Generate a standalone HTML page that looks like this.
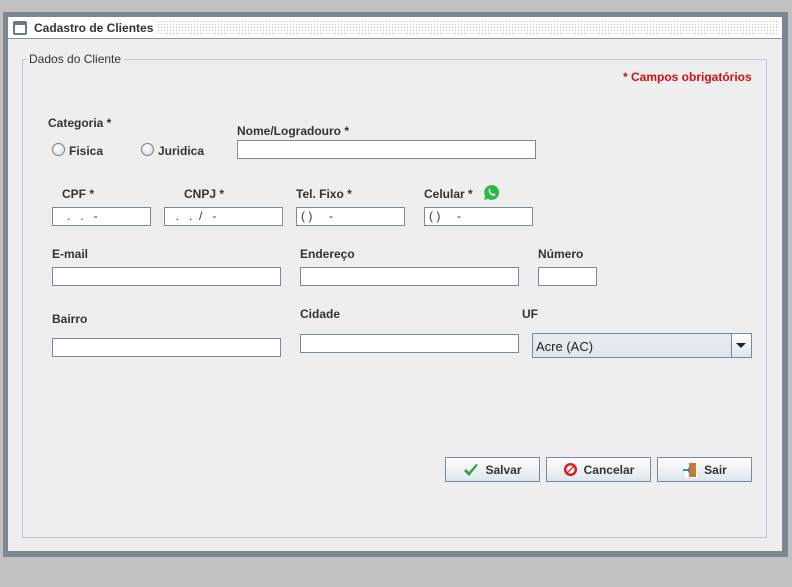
<html><head><style>
body{margin:0;width:792px;height:587px;background:#c0c0c0;position:relative;overflow:hidden;font-family:"Liberation Sans",sans-serif;font-size:12px;color:#222}
div,span{position:absolute;box-sizing:border-box}
.l{font-weight:bold;font-size:12px;color:#333}
.t{background:#fff;border:1px solid #7a8a99;height:19px;font-size:12px;padding:1px 0 0 4px;color:#333;white-space:pre}
.b{height:25px;top:457px;border:1px solid #7a8a99;background:linear-gradient(#fff,#dde6ee);font-weight:bold;font-size:12px;color:#333;display:flex;align-items:center;justify-content:center;gap:6px}
.r{width:13px;height:13px;border-radius:50%;border:1px solid #6f7f8f;background:radial-gradient(circle at 40% 35%,#fff,#cfd8e0)}
</style></head><body>
<div style="left:3px;top:12px;width:785px;height:545px;background:#7b8894"></div>
<div style="left:8px;top:17px;width:774px;height:534px;background:#eeeeee"></div>
<div style="left:8px;top:17px;width:774px;height:22px;background:#fff;border-bottom:1px solid #8a96a0"></div>
<div style="left:157px;top:20px;width:620px;height:16px;background-image:radial-gradient(#bbb 0.6px,transparent 0.7px);background-size:3px 3px"></div>
<div style="left:13px;top:21px;width:14px;height:14px;border:2px solid #6c7a88;border-top-width:4px;border-radius:2px;background:#fff"></div>
<div style="left:34px;top:21px;font-weight:bold;font-size:12px;color:#333">Cadastro de Clientes</div>
<div style="left:22px;top:59px;width:745px;height:479px;border:1px solid #b8c8d8"></div>
<div style="left:26px;top:52px;background:#eeeeee;padding:0 3px;font-size:12px;color:#333">Dados do Cliente</div>
<div style="left:623px;top:70px;font-weight:bold;color:#d01010">* Campos obrigatórios</div>
<div class="l" style="left:48px;top:116px">Categoria *</div>
<div class="r" style="left:52px;top:143px"></div><div class="l" style="left:69px;top:144px">Fisica</div>
<div class="r" style="left:141px;top:143px"></div><div class="l" style="left:158px;top:144px">Juridica</div>
<div class="l" style="left:237px;top:124px">Nome/Logradouro *</div>
<div class="t" style="left:237px;top:140px;width:299px"></div>
<div class="l" style="left:62px;top:187px">CPF *</div>
<div class="l" style="left:184px;top:187px">CNPJ *</div>
<div class="l" style="left:296px;top:187px">Tel. Fixo *</div>
<div class="l" style="left:424px;top:187px">Celular *</div>
<svg style="position:absolute;left:483px;top:184px" width="17" height="17" viewBox="0 0 16 16"><path d="M8 1a7 7 0 0 0-6 10.5L1 15l3.6-1A7 7 0 1 0 8 1z" fill="#2db84a"/><path d="M5.5 4.5c.4-.3.8-.2 1 .2l.6 1.3c.1.3 0 .5-.3.8-.2.2-.2.4 0 .7.5.8 1.1 1.4 1.9 1.8.3.1.5.1.6-.1.3-.4.5-.5.8-.4l1.3.6c.3.2.4.5.2.9-.3.7-1 1.1-1.8.9-2-.5-3.8-2.3-4.4-4.3-.2-.7 0-1.2.1-1.4z" fill="#fff"/></svg>
<div class="t" style="left:52px;top:207px;width:99px">   .   .   -</div>
<div class="t" style="left:164px;top:207px;width:119px">  .   .  /   -</div>
<div class="t" style="left:296px;top:207px;width:109px">( )     -</div>
<div class="t" style="left:424px;top:207px;width:109px">( )     -</div>
<div class="l" style="left:52px;top:247px">E-mail</div>
<div class="l" style="left:300px;top:247px">Endereço</div>
<div class="l" style="left:538px;top:247px">Número</div>
<div class="t" style="left:52px;top:267px;width:229px"></div>
<div class="t" style="left:300px;top:267px;width:219px"></div>
<div class="t" style="left:538px;top:267px;width:59px"></div>
<div class="l" style="left:52px;top:312px">Bairro</div>
<div class="l" style="left:300px;top:307px">Cidade</div>
<div class="l" style="left:522px;top:307px">UF</div>
<div class="t" style="left:52px;top:338px;width:229px"></div>
<div class="t" style="left:300px;top:334px;width:219px"></div>
<div style="left:532px;top:333px;width:220px;height:25px;border:1px solid #7a8a99;background:linear-gradient(#e8edf2,#dfe6ed);font-size:13px;color:#222;padding:5px 0 0 3px">Acre (AC)</div>
<div style="left:731px;top:334px;width:20px;height:23px;border-left:1px solid #7a8a99;background:linear-gradient(#fff,#dde6ee)"></div>
<div style="left:736px;top:343px;width:0;height:0;border-left:5px solid transparent;border-right:5px solid transparent;border-top:5px solid #222"></div>
<div class="b" style="left:445px;width:95px"><svg width="16" height="14" viewBox="0 0 16 14"><path d="M1 8l5 5L15 2l-2-1-7 8-3-3z" fill="#3aa040"/></svg>Salvar</div>
<div class="b" style="left:546px;width:105px"><svg width="15" height="15" viewBox="0 0 16 16"><circle cx="8" cy="8" r="7" fill="#d42020"/><circle cx="8" cy="8" r="4.3" fill="#fff"/><path d="M4 11L11 4l1 1-7 7z" fill="#d42020"/></svg>Cancelar</div>
<div class="b" style="left:657px;width:95px"><svg width="16" height="16" viewBox="0 0 16 16"><rect x="3" y="2" width="12" height="14" fill="#fff"/><rect x="7" y="1" width="7" height="14" fill="#c77a30"/><path d="M1 7h5V5l3 3-3 3V9H1z" fill="#3a88c8"/></svg>Sair</div>
</body></html>
